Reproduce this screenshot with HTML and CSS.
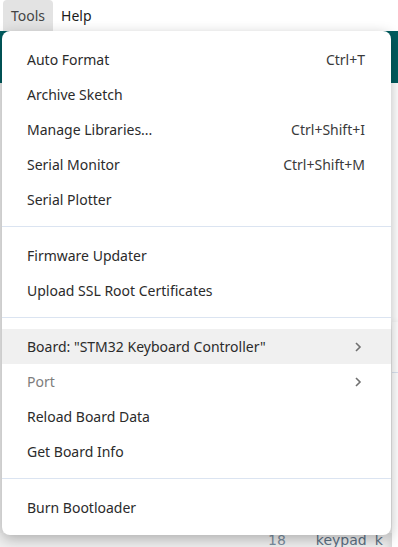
FILE: index.html
```html
<!DOCTYPE html>
<html lang="en">
  <head>
    <meta charset="UTF-8" />
    <title>Tools menu</title>
    <link rel="stylesheet" href="styles.css">
  </head>
  <body>
    <div id="menubar">
      <span class="top-item active">Tools</span>
      <span class="top-item">Help</span>
    </div>
    <div id="toolbar"></div>

    <div id="editor"></div>

    <div id="bottom-strip">
      <span class="line-no">18</span>
      <span class="code-word">keypad</span>
      <span class="code-word">k</span>
    </div>

    <div class="submenu-peek">
      <div class="peek-line"></div>
    </div>

    <div class="menu">
      <div class="menu-group">
        <div class="menu-item"><span>Auto Format</span><span class="shortcut">Ctrl+T</span></div>
        <div class="menu-item"><span>Archive Sketch</span></div>
        <div class="menu-item"><span>Manage Libraries...</span><span class="shortcut">Ctrl+Shift+I</span></div>
        <div class="menu-item"><span>Serial Monitor</span><span class="shortcut">Ctrl+Shift+M</span></div>
        <div class="menu-item"><span>Serial Plotter</span></div>
      </div>
      <div class="separator"></div>
      <div class="menu-group">
        <div class="menu-item"><span>Firmware Updater</span></div>
        <div class="menu-item"><span>Upload SSL Root Certificates</span></div>
      </div>
      <div class="separator"></div>
      <div class="menu-group">
        <div class="menu-item hover"><span>Board: "STM32 Keyboard Controller"</span>
          <svg class="chevron" width="8" height="12" viewBox="0 0 8 12"><path d="M2 2 L6 6 L2 10" fill="none" stroke="currentColor" stroke-width="1.6"/></svg>
        </div>
        <div class="menu-item disabled"><span>Port</span>
          <svg class="chevron" width="8" height="12" viewBox="0 0 8 12"><path d="M2 2 L6 6 L2 10" fill="none" stroke="currentColor" stroke-width="1.6"/></svg>
        </div>
        <div class="menu-item"><span>Reload Board Data</span></div>
        <div class="menu-item"><span>Get Board Info</span></div>
      </div>
      <div class="separator"></div>
      <div class="menu-group">
        <div class="menu-item"><span>Burn Bootloader</span></div>
      </div>
    </div>
  </body>
</html>
```

FILE: styles.css
```css
body {
  margin: 0;
  padding: 0;
  width: 398px;
  height: 547px;
  overflow: hidden;
  position: relative;
  background: #fff;
  font-family: "Noto Sans", "Open Sans", sans-serif;
  color: #333;
}

#menubar {
  height: 31px;
  display: flex;
  align-items: stretch;
  padding-left: 3px;
  background: #fff;
}

.top-item {
  display: flex;
  align-items: center;
  padding: 0 8px;
  font-size: 14px;
  color: #1b1b1b;
}

.top-item.active {
  background: #e3e3e3;
  border-radius: 4px 4px 0 0;
  color: #444;
}

#toolbar {
  height: 52px;
  background: #005c5f;
}

#editor {
  height: 452px;
  border-left: 3px solid #ececec;
}

#bottom-strip {
  position: absolute;
  left: 0;
  right: 0;
  bottom: 0;
  height: 14px;
  background: #f0f0f0;
  display: flex;
  align-items: flex-end;
  gap: 8px;
  padding-left: 268px;
  font-family: "DejaVu Sans", sans-serif;
  font-size: 14px;
  line-height: 14px;
  color: #5d7184;
  overflow: hidden;
}

.line-no {
  margin-right: 22px;
  color: #7a8ea0;
}

.submenu-peek {
  position: absolute;
  left: 392px;
  top: 322px;
  width: 6px;
  height: 240px;
  background: #fff;
  box-shadow: 0 3px 10px rgba(0, 0, 0, 0.22);
}

.peek-line {
  margin-top: 50px;
  border-top: 1px solid #dbe4f1;
}

.menu {
  position: absolute;
  left: 2px;
  top: 31px;
  width: 389px;
  padding: 11px 0 10px;
  background: #fff;
  border-radius: 8px;
  box-shadow: 0 4px 14px rgba(0, 0, 0, 0.28);
}

.menu-item {
  height: 35px;
  display: flex;
  align-items: center;
  justify-content: space-between;
  padding: 0 26px 0 25px;
  font-size: 14px;
  color: #2b2b2b;
}

.menu-item.hover {
  background: #f0f0f0;
}

.menu-item.disabled {
  color: #7d7d7d;
}

.shortcut {
  color: #3a3a3a;
}

.chevron {
  color: #707070;
  margin-right: 3px;
}

.separator {
  margin: 9px 0 11px;
  border-top: 1px solid #dbe4f1;
}
```
